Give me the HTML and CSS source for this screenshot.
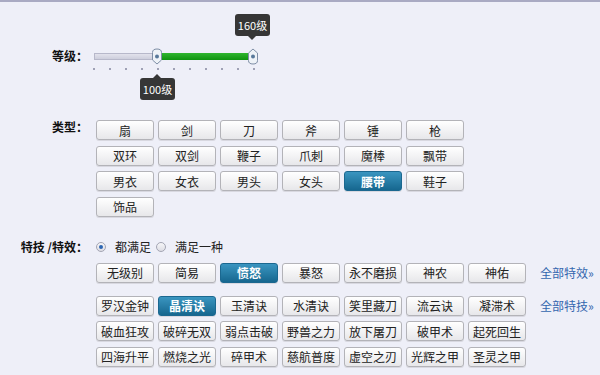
FILE: index.html
```html
<!DOCTYPE html>
<html lang="zh-CN">
<head>
    <meta charset="UTF-8" />
    <title>装备筛选</title>
    <link rel="stylesheet" href="styles.css">
</head>
<body>
    <div class="page">

        <div class="row level-row">
            <div class="label">等级：</div>
            <div class="slider">
                <div class="tip tip-up">160级</div>
                <div class="track"><div class="fill"></div></div>
                <div class="dots">
                    <span></span><span></span><span></span><span></span><span></span><span></span>
                    <span></span><span></span><span></span><span></span><span></span>
                </div>
                <svg class="handle handle-low" width="12" height="17" viewBox="0 0 12 17">
                    <path d="M1.5 4.5 Q1.5 1 6 1 Q10.5 1 10.5 4.5 L10.5 12 L6 16 L1.5 12 Z" fill="#eef2f7" stroke="#7e8ea6" />
                    <circle cx="6" cy="8.5" r="2" fill="#58789a" />
                </svg>
                <svg class="handle handle-high" width="12" height="17" viewBox="0 0 12 17">
                    <path d="M1.5 12.5 Q1.5 16 6 16 Q10.5 16 10.5 12.5 L10.5 5 L6 1 L1.5 5 Z" fill="#eef2f7" stroke="#7e8ea6" />
                    <circle cx="6" cy="8.5" r="2" fill="#58789a" />
                </svg>
                <div class="tip tip-down">100级</div>
            </div>
        </div>

        <div class="row type-row">
            <div class="label">类型：</div>
            <div class="grid type-grid">
                <button class="btn">扇</button>
                <button class="btn">剑</button>
                <button class="btn">刀</button>
                <button class="btn">斧</button>
                <button class="btn">锤</button>
                <button class="btn">枪</button>
                <button class="btn">双环</button>
                <button class="btn">双剑</button>
                <button class="btn">鞭子</button>
                <button class="btn">爪刺</button>
                <button class="btn">魔棒</button>
                <button class="btn">飘带</button>
                <button class="btn">男衣</button>
                <button class="btn">女衣</button>
                <button class="btn">男头</button>
                <button class="btn">女头</button>
                <button class="btn active">腰带</button>
                <button class="btn">鞋子</button>
                <button class="btn">饰品</button>
            </div>
        </div>

        <div class="row feature-row">
            <div class="label">特技 /特效：</div>
            <div class="feature-body">
                <div class="radios">
                    <span class="radio checked"></span><span class="radio-text">都满足</span>
                    <span class="radio"></span><span class="radio-text">满足一种</span>
                </div>

                <div class="grid feature-grid effects">
                    <button class="btn">无级别</button>
                    <button class="btn">简易</button>
                    <button class="btn active">愤怒</button>
                    <button class="btn">暴怒</button>
                    <button class="btn">永不磨损</button>
                    <button class="btn">神农</button>
                    <button class="btn">神佑</button>
                    <a class="more" href="#">全部特效»</a>
                </div>

                <div class="grid feature-grid skills">
                    <button class="btn">罗汉金钟</button>
                    <button class="btn active">晶清诀</button>
                    <button class="btn">玉清诀</button>
                    <button class="btn">水清诀</button>
                    <button class="btn">笑里藏刀</button>
                    <button class="btn">流云诀</button>
                    <button class="btn">凝滞术</button>
                    <a class="more" href="#">全部特技»</a>
                    <button class="btn">破血狂攻</button>
                    <button class="btn">破碎无双</button>
                    <button class="btn">弱点击破</button>
                    <button class="btn">野兽之力</button>
                    <button class="btn">放下屠刀</button>
                    <button class="btn">破甲术</button>
                    <button class="btn">起死回生</button>
                    <span></span>
                    <button class="btn">四海升平</button>
                    <button class="btn">燃烧之光</button>
                    <button class="btn">碎甲术</button>
                    <button class="btn">慈航普度</button>
                    <button class="btn">虚空之刃</button>
                    <button class="btn">光辉之甲</button>
                    <button class="btn">圣灵之甲</button>
                </div>
            </div>
        </div>

    </div>
</body>
</html>
```

FILE: styles.css
```css
html, body {
    margin: 0;
    height: 100%;
    background-color: #eeeff8;
    font-family: "Noto Sans CJK SC", "Liberation Sans", sans-serif;
    font-size: 12px;
    color: #222;
}

.page {
    border-top: 2px solid #a9aac3;
    height: 100%;
    box-sizing: border-box;
    overflow: hidden;
}

.row {
    display: flex;
    align-items: flex-start;
}

.label {
    width: 88px;
    text-align: right;
    font-weight: bold;
    line-height: 14px;
    color: #111;
    flex-shrink: 0;
}

/* level slider */
.level-row {
    margin-top: 12px;
}

.level-row .label {
    margin-top: 35px;
}

.slider {
    position: relative;
    margin-left: 6px;
    width: 170px;
    height: 86px;
}

.track {
    position: absolute;
    top: 39px;
    left: 0;
    width: 161px;
    height: 7px;
    background: linear-gradient(#e2e2ec, #cdcedc);
    border: 1px solid #b7b8ca;
    box-sizing: border-box;
}

.fill {
    position: absolute;
    top: -1px;
    bottom: -1px;
    left: 63px;
    width: 96px;
    background: linear-gradient(#2fb52f, #0f930f);
}

.dots {
    position: absolute;
    top: 54px;
    left: -1px;
    width: 162px;
    display: flex;
    justify-content: space-between;
}

.dots span {
    width: 2px;
    height: 2px;
    background-color: #9fa1b5;
}

.handle {
    position: absolute;
    top: 34px;
}

.handle-low {
    left: 57px;
}

.handle-high {
    left: 153px;
}

.tip {
    position: absolute;
    width: 35px;
    height: 22px;
    line-height: 22px;
    text-align: center;
    background-color: #363636;
    color: #fff;
    font-size: 11px;
    border-radius: 3px;
}

.tip::after {
    content: "";
    position: absolute;
    left: 13px;
    border: 4px solid transparent;
}

.tip-up {
    top: 0;
    left: 141px;
}

.tip-up::after {
    top: 22px;
    border-top-color: #363636;
}

.tip-down {
    top: 64px;
    left: 46px;
}

.tip-down::after {
    top: -8px;
    border-bottom-color: #363636;
}

/* button grids */
.grid {
    display: grid;
    margin-left: 8px;
    column-gap: 4px;
    row-gap: 5.5px;
    grid-auto-rows: 20px;
}

.type-row {
    margin-top: 20px;
}

.type-grid {
    grid-template-columns: repeat(6, 58px);
}

.btn {
    padding: 0;
    height: 20px;
    font-family: inherit;
    font-size: 12px;
    color: #222;
    background: linear-gradient(#ffffff, #e7e7ea);
    border: 1px solid #b3b3b8;
    border-radius: 3px;
    box-shadow: 0 1px 0 #d8d8e0;
    cursor: pointer;
}

.btn.active {
    background: linear-gradient(#3a95c0, #16678f);
    border-color: #1b6890;
    color: #fff;
    font-weight: bold;
}

/* features */
.feature-row {
    margin-top: 23px;
}

.radios {
    display: flex;
    align-items: center;
    height: 14px;
    margin-left: 8px;
}

.radio {
    width: 10px;
    height: 10px;
    border: 1px solid #a3a5b3;
    border-radius: 50%;
    background: linear-gradient(#f6f6f8, #dddde4);
    box-sizing: border-box;
    position: relative;
}

.radio.checked::after {
    content: "";
    position: absolute;
    top: 2px;
    left: 2px;
    width: 4px;
    height: 4px;
    border-radius: 50%;
    background-color: #2d66b3;
}

.radio-text {
    margin-left: 9px;
    margin-right: 5px;
}

.feature-grid {
    grid-template-columns: repeat(7, 58px) auto;
}

.effects {
    margin-top: 9px;
}

.skills {
    margin-top: 13px;
}

.more {
    margin-left: 10px;
    line-height: 20px;
    color: #3466ae;
    text-decoration: none;
    white-space: nowrap;
}
```
